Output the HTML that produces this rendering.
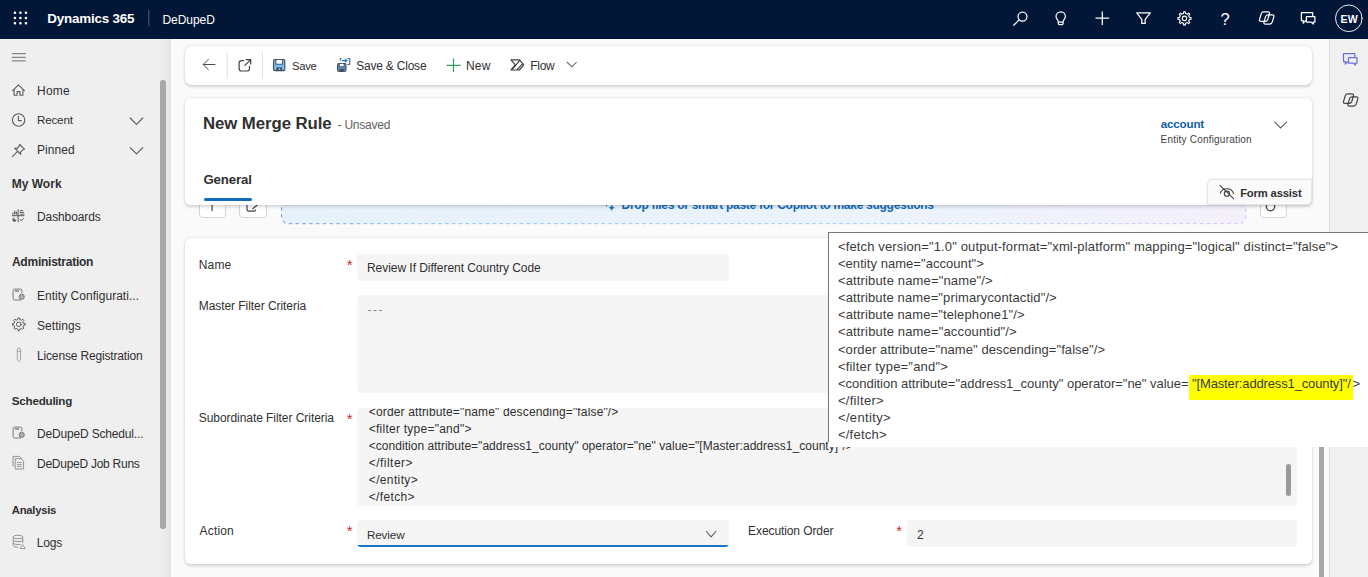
<!DOCTYPE html>
<html lang="en">
<head>
<meta charset="utf-8">
<title>Merge Rule: New Merge Rule - Dynamics 365</title>
<style>
*{box-sizing:border-box;margin:0;padding:0}
html,body{width:1368px;height:577px;overflow:hidden;background:#fafafa;font-family:"Liberation Sans",sans-serif;color:#303030;font-size:12px}
.t{position:absolute;white-space:pre;line-height:16px}
.a{position:absolute}
svg.ov{position:absolute;left:0;top:0;width:1368px;height:577px;overflow:visible;pointer-events:none}
#topbar{position:absolute;left:0;top:0;width:1368px;height:39px;background:#021638}
#side{position:absolute;left:0;top:39px;width:171px;height:538px;background:#efefef;border-right:1px solid #d4d4d4}
#rside{position:absolute;left:1329px;top:39px;width:39px;height:538px;background:#f0f0f0;border-left:1px solid #dcdcdc}
.card{position:absolute;background:#fff;border-radius:5px;box-shadow:0 1.5px 3.5px rgba(0,0,0,.15),0 0 2px rgba(0,0,0,.10)}
.fld{position:absolute;background:#f5f5f5;border-radius:4px}
.sbtn{position:absolute;background:#fff;border:1px solid #d6d6d6;border-radius:4px}
#popup{position:absolute;left:828px;top:232px;width:560px;height:214.6px;background:#fff;border-top:1px solid #787878}
#popupl{position:absolute;left:828px;top:232px;width:1px;height:210px;background:#787878}
#hl{position:absolute;left:1189px;top:375px;width:164.2px;height:24.6px;background:#ffff00}
</style>
</head>
<body>
<div id="under">
<div class="sbtn" style="left:198.5px;top:190px;width:27.5px;height:27.5px"></div>
<div class="sbtn" style="left:239px;top:190px;width:27.5px;height:27.5px"></div>
<div class="sbtn" style="left:1259.5px;top:190px;width:27px;height:27.5px"></div>
<svg class="ov"><defs><linearGradient id="dzf" x1="0" y1="0" x2="1" y2="0"><stop offset="0" stop-color="#e6f2fb"/><stop offset=".6" stop-color="#ebf3fc"/><stop offset="1" stop-color="#f4f0fb"/></linearGradient><linearGradient id="dzs" gradientUnits="userSpaceOnUse" x1="281" y1="0" x2="1246" y2="0"><stop offset="0" stop-color="#4a63e8"/><stop offset=".12" stop-color="#6aa6f2"/><stop offset=".7" stop-color="#86c3f3"/><stop offset="1" stop-color="#c7adfa"/></linearGradient></defs><rect x="281.6" y="170" width="964.2" height="53.7" rx="7" fill="url(#dzf)" stroke="url(#dzs)" stroke-opacity=".75" stroke-width="1" stroke-dasharray="3.4 3.4"/><path d="M611.7 205.2 L612.5 207 L614.3 207.8 L612.5 208.6 L611.7 210.4 L610.9 208.6 L609.1 207.8 L610.9 207 Z" fill="#0f6cbd" stroke="#0f6cbd" stroke-width=".5"/><circle cx="606.6" cy="205.8" r=".7" fill="#0f6cbd"/><path d="M212.1 198 V211" stroke="#424242" stroke-width="1.2"/><path d="M247 203 V209.6 Q247 211.2 248.6 211.2 H254 Q255.6 211.2 255.6 209.6 M252.5 209 L258.5 204" fill="none" stroke="#424242" stroke-width="1.2"/><ellipse cx="1270.5" cy="206.6" rx="4.2" ry="4.2" fill="none" stroke="#424242" stroke-width="1.3"/></svg>
<span class="t" style="left:621.60px;top:197.20px;font-size:12px;font-weight:bold;color:#0f6cbd;letter-spacing:-0.280px;">Drop files or smart paste for Copilot to make suggestions</span>
</div>
<div class="card" style="left:185px;top:238px;width:1127px;height:325.5px;border-radius:6px"></div>
<div class="fld" style="left:356.5px;top:254px;width:372.5px;height:26.5px"></div>
<div class="fld" style="left:356.5px;top:295px;width:940.5px;height:97.5px"></div>
<div class="fld" id="sub" style="left:356.5px;top:407.7px;width:940.5px;height:98.3px;overflow:hidden"></div>
<div class="fld" style="left:356.5px;top:520px;width:372.5px;height:27px;border-radius:4px;overflow:hidden"><div class="a" style="left:0;bottom:0;width:100%;height:1.7px;background:#1b74c5"></div></div>
<div class="fld" style="left:906.5px;top:520px;width:390.5px;height:27px"></div>
<div class="a" style="left:1286px;top:464px;width:5px;height:31.5px;border-radius:2.5px;background:#9a9a9a"></div>
<div class="a" style="left:0;top:407.7px;width:1368px;height:98.3px;overflow:hidden"><div class="a" style="left:0;top:-407.7px">
<span class="t" style="left:368.78px;top:403.90px;font-size:12px;letter-spacing:0.149px;">&lt;order attribute="name" descending="false"/&gt;</span>
<span class="t" style="left:368.78px;top:420.80px;font-size:12px;letter-spacing:0.248px;">&lt;filter type="and"&gt;</span>
<span class="t" style="left:368.78px;top:437.80px;font-size:12px;letter-spacing:0.029px;">&lt;condition attribute="address1_county" operator="ne" value="[Master:address1_county]"/&gt;</span>
<span class="t" style="left:368.78px;top:454.70px;font-size:12px;letter-spacing:0.463px;">&lt;/filter&gt;</span>
<span class="t" style="left:368.78px;top:471.80px;font-size:12px;letter-spacing:0.363px;">&lt;/entity&gt;</span>
<span class="t" style="left:368.78px;top:488.70px;font-size:12px;letter-spacing:0.349px;">&lt;/fetch&gt;</span>
</div></div>
<span class="t" style="left:198.70px;top:256.50px;font-size:12px;letter-spacing:0.192px;">Name</span>
<span class="t" style="left:198.70px;top:297.60px;font-size:12px;letter-spacing:-0.056px;">Master Filter Criteria</span>
<span class="t" style="left:198.70px;top:409.70px;font-size:12px;letter-spacing:-0.054px;">Subordinate Filter Criteria</span>
<span class="t" style="left:199.59px;top:522.60px;font-size:12px;letter-spacing:0.154px;">Action</span>
<span class="t" style="left:748.10px;top:522.60px;font-size:12px;letter-spacing:-0.096px;">Execution Order</span>
<span class="t" style="left:367.00px;top:259.70px;font-size:12px;letter-spacing:-0.045px;">Review If Different Country Code</span>
<span class="t" style="left:367.62px;top:301.50px;font-size:12px;color:#8a8a8a;letter-spacing:1.422px;">---</span>
<span class="t" style="left:367.00px;top:526.50px;font-size:11.64px;letter-spacing:-0.119px;">Review</span>
<span class="t" style="left:916.96px;top:526.50px;font-size:12px;">2</span>
<span class="t" style="left:346.64px;top:256.80px;font-size:15px;color:#c62d3a;">*</span>
<span class="t" style="left:346.64px;top:411.00px;font-size:15px;color:#c62d3a;">*</span>
<span class="t" style="left:346.64px;top:523.10px;font-size:15px;color:#c62d3a;">*</span>
<span class="t" style="left:896.14px;top:523.10px;font-size:15px;color:#c62d3a;">*</span>
<svg class="ov"><path d="M706 531 L711.1 536.9 L716.2 531" fill="none" stroke="#616161" stroke-width="1.1"/></svg>
<div class="card" style="left:185px;top:46px;width:1127px;height:38.7px;border-radius:7px"></div>
<div class="card" style="left:185px;top:98px;width:1127px;height:107.2px"></div>
<div class="a" style="left:1207px;top:178.6px;width:105px;height:26.6px;background:#fafafa;border:1px solid #e6e6e6;border-radius:6px 0 5px 0;box-shadow:0 0 2px rgba(0,0,0,.12)"></div>
<div class="a" style="left:203.5px;top:198px;width:48.2px;height:3px;border-radius:1.5px;background:#0f6cbd"></div>
<svg class="ov"><path d="M227.3 51.5 V78.7 M262.4 51.5 V78.7" stroke="#e0e0e0" stroke-width="1"/><g fill="none" stroke="#424242" stroke-width="1.1" stroke-linecap="round" stroke-linejoin="round"><path d="M215 64.5 H203.4 M208.4 59.3 L203.2 64.5 L208.4 69.7" stroke="#4a4a4a" stroke-width="1"/><path d="M243.6 60.6 H241.6 Q239.1 60.6 239.1 63.1 V68.5 Q239.1 71 241.6 71 H247 Q249.5 71 249.5 68.5 V66.4 M246.2 59.6 H250.7 V64.1 M250.5 59.8 L244.9 65.4" stroke-width="1.2"/><path d="M511 59.9 H519.6 L523.7 64.9 L519.4 70 H511 L515.3 64.9 Z M519.6 60.7 L512.9 68.7 M522.5 63.8 L517 69.7" stroke-width="1.2"/></g><path d="M566.9 62 L571.8 66.8 L576.6 62" fill="none" stroke="#616161" stroke-width="1.05"/><path d="M1274.2 121.6 L1280.6 128 L1287 121.6" fill="none" stroke="#616161" stroke-width="1.1"/><path d="M453.5 58.6 V72 M446.6 65.3 H460.6" stroke="#2aa05a" stroke-width="1.2" fill="none"/><rect x="273.6" y="59.5" width="11.2" height="11.1" rx="1.2" fill="#79bdf5" stroke="#3d4b5d" stroke-width="1.1"/><rect x="275.9" y="59.6" width="6.7" height="4.6" fill="#fff" stroke="#3d4b5d" stroke-width=".9"/><rect x="276.3" y="67.4" width="5.8" height="3.4" fill="#3d4b5d"/><rect x="278.6" y="68.5" width="1.6" height="1.4" fill="#b9d8f2"/><rect x="337.5" y="63.5" width="8.5" height="7.9" rx="1" fill="#5f87b3" stroke="#3d4b5d" stroke-width="1"/><rect x="339.4" y="63.6" width="4.6" height="3" fill="#fff" stroke="#3d4b5d" stroke-width=".7"/><rect x="339.6" y="69" width="4.2" height="2.4" fill="#3d4b5d"/><path d="M340.2 60.6 V58.6 H341.6 M347.6 58.6 H349.8 V64.4 H347.4" fill="none" stroke="#3d4b5d" stroke-width="1"/><path d="M341.8 60.6 H346.6 M345 58.9 L346.9 60.6 L345 62.3" fill="none" stroke="#1a7ae0" stroke-width="1.2"/><g fill="none" stroke="#424242" stroke-width="1.1" stroke-linecap="round"><path d="M1219.9 185.4 L1233.6 198.7"/><path d="M1220.4 193.2 Q1221.6 188.8 1227 188.8 Q1232.2 188.8 1233.5 193.6"/><circle cx="1226.9" cy="193.7" r="2.6"/></g></svg>
<div id="hdrtext">
<span class="t" style="left:292.04px;top:57.80px;font-size:11.29px;letter-spacing:-0.320px;">Save</span>
<span class="t" style="left:356.20px;top:57.80px;font-size:12px;letter-spacing:-0.211px;">Save &amp; Close</span>
<span class="t" style="left:466.00px;top:57.80px;font-size:12px;letter-spacing:0.195px;">New</span>
<span class="t" style="left:530.20px;top:57.80px;font-size:12px;letter-spacing:-0.260px;">Flow</span>
<span class="t" style="left:203.00px;top:116.00px;font-size:16.8px;font-weight:bold;letter-spacing:-0.077px;">New Merge Rule</span>
<span class="t" style="left:337.52px;top:117.00px;font-size:12px;color:#616161;letter-spacing:-0.222px;">- Unsaved</span>
<span class="t" style="left:1160.68px;top:116.00px;font-size:11.64px;font-weight:bold;color:#115ea3;letter-spacing:-0.171px;">account</span>
<span class="t" style="left:1160.60px;top:131.50px;font-size:10px;color:#424242;letter-spacing:0.199px;">Entity Configuration</span>
<span class="t" style="left:203.43px;top:171.70px;font-size:13.2px;font-weight:bold;letter-spacing:-0.105px;">General</span>
<span class="t" style="left:1240.13px;top:185.30px;font-size:11.25px;font-weight:bold;letter-spacing:-0.165px;">Form assist</span>
</div>
<div class="a" style="left:1319.3px;top:300px;width:4.8px;height:290px;background:#a8a8a8"></div>
<div id="side"></div>
<div class="a" style="left:158px;top:39px;width:13px;height:538px;background:linear-gradient(to right,#efefef,#e5e5e5)"></div>
<div class="a" style="left:160.3px;top:80px;width:5.4px;height:449px;border-radius:2.7px;background:#a8a8a8"></div>
<svg class="ov"><path d="M11.8 53.7 H25.8 M11.8 57.3 H25.8 M11.8 60.9 H25.8" stroke="#6e6e6e" stroke-width="1" fill="none"/><g fill="none" stroke="#5a5a5a" stroke-width="1.1" stroke-linejoin="round" stroke-linecap="round"><path d="M12.6 90.6 L18.5 84.9 L24.4 90.6 M14.1 89.4 V95.2 H17.1 V91.6 H19.9 V95.2 H22.9 V89.4"/><circle cx="18.6" cy="120" r="6.2"/><path d="M18.4 116.2 V120.6 H21.4"/><path d="M19.7 144.4 L24.6 149.3 L22.8 149.8 L20.5 152.1 L20.8 154.4 L14.6 148.2 L16.9 148.5 L19.2 146.2 Z M17.6 151.4 L12.3 156.7"/><path d="M130.2 118 L136.5 124.3 L142.8 118 M130.2 147.6 L136.5 153.9 L142.8 147.6"/><path d="M23.60 323.30 L25.14 323.46 L25.14 325.14 L23.60 325.30 L22.90 326.98 L23.88 328.19 L22.69 329.38 L21.48 328.40 L19.80 329.10 L19.64 330.64 L17.96 330.64 L17.80 329.10 L16.12 328.40 L14.91 329.38 L13.72 328.19 L14.70 326.98 L14.00 325.30 L12.46 325.14 L12.46 323.46 L14.00 323.30 L14.70 321.62 L13.72 320.41 L14.91 319.22 L16.12 320.20 L17.80 319.50 L17.96 317.96 L19.64 317.96 L19.80 319.50 L21.48 320.20 L22.69 319.22 L23.88 320.41 L22.90 321.62 Z" stroke-width="1"/><circle cx="18.8" cy="324.3" r="2.3" stroke-width="1"/></g><g stroke="#555" fill="none" stroke-width="1"><path d="M18.1 209.4 V222.2 M11.9 215.7 H24.4"/><path d="M13 214.5 V212.5 M14.8 214.5 V210.8 M16.4 214.5 V211.8" stroke-width="1.1"/><path d="M19.8 210.6 H23.2 M19.8 212.4 H24 M19.8 214.1 H24.4" stroke-width=".9"/><path d="M14.4 217.8 A2 2 0 1 0 16.4 219.8 H14.4 Z" fill="#555" stroke="none"/><path d="M19.8 219.4 L21.2 220.7 L23.8 218.2" stroke-width="1"/></g><g transform="translate(0,0)" fill="none" stroke="#7a7a7a" stroke-width="1"><path d="M14.6 289.1 H20.4 Q21.9 289.1 21.9 290.6 V293.2 M21 300 H14.6 Q13.1 300 13.1 298.5 V290.6 Q13.1 289.1 14.6 289.1"/><path d="M14.8 291 H19.2" stroke-width="1.4"/><circle cx="21.7" cy="296.8" r="2.6" fill="#7a7a7a" fill-opacity=".55"/></g><g transform="translate(0,138)" fill="none" stroke="#7a7a7a" stroke-width="1"><path d="M14.6 289.1 H20.4 Q21.9 289.1 21.9 290.6 V293.2 M21 300 H14.6 Q13.1 300 13.1 298.5 V290.6 Q13.1 289.1 14.6 289.1"/><path d="M14.8 291 H19.2" stroke-width="1.4"/><circle cx="21.7" cy="296.8" r="2.6" fill="#7a7a7a" fill-opacity=".55"/></g><path d="M17.3 349.5 Q17.3 348 18.9 348 Q20.5 348 20.5 349.5 V360 L18.9 361.5 L17.3 360 Z M17.3 351.2 H20.5" fill="none" stroke="#9a9a9a" stroke-width=".9"/><g fill="none" stroke="#8a8a8a" stroke-width=".9"><path d="M13 466.5 V456.4 H19.5 L22 459 "/><path d="M15.2 458.6 H21 L23.6 461.2 V469 H15.2 Z"/><path d="M16.8 462.6 H22 M16.8 464.6 H22 M16.8 466.6 H22" stroke-width=".8"/></g><g fill="none" stroke="#8a8a8a" stroke-width=".9"><ellipse cx="18" cy="537" rx="4.8" ry="1.8"/><path d="M13.2 537 V545.5 Q13.2 547.3 18 547.3 M22.8 537 V543 M13.2 539.9 Q13.2 541.7 18 541.7 Q22.8 541.7 22.8 539.9 M13.2 542.8 Q13.2 544.6 18 544.6 Q20 544.6 21 544.2"/><path d="M20 548.5 L22.6 544.6 L25.2 548.5 Z" stroke-width=".8"/></g></svg>
<span class="t" style="left:37.00px;top:82.80px;font-size:12px;letter-spacing:0.258px;">Home</span>
<span class="t" style="left:37.00px;top:112.30px;font-size:11.64px;letter-spacing:-0.186px;">Recent</span>
<span class="t" style="left:37.00px;top:142.40px;font-size:12px;letter-spacing:0.042px;">Pinned</span>
<span class="t" style="left:11.70px;top:176.00px;font-size:12px;font-weight:bold;letter-spacing:0.014px;">My Work</span>
<span class="t" style="left:37.00px;top:209.40px;font-size:12px;letter-spacing:-0.102px;">Dashboards</span>
<span class="t" style="left:11.96px;top:254.00px;font-size:12px;font-weight:bold;letter-spacing:-0.246px;">Administration</span>
<span class="t" style="left:37.00px;top:287.70px;font-size:12px;letter-spacing:0.030px;">Entity Configurati...</span>
<span class="t" style="left:37.00px;top:317.60px;font-size:12px;letter-spacing:0.066px;">Settings</span>
<span class="t" style="left:37.00px;top:347.70px;font-size:12px;letter-spacing:-0.157px;">License Registration</span>
<span class="t" style="left:11.86px;top:392.80px;font-size:11.64px;font-weight:bold;letter-spacing:-0.245px;">Scheduling</span>
<span class="t" style="left:37.00px;top:425.50px;font-size:12px;letter-spacing:-0.171px;">DeDupeD Schedul...</span>
<span class="t" style="left:37.00px;top:455.50px;font-size:12px;letter-spacing:-0.260px;">DeDupeD Job Runs</span>
<span class="t" style="left:11.76px;top:501.70px;font-size:11.29px;font-weight:bold;letter-spacing:-0.267px;">Analysis</span>
<span class="t" style="left:36.80px;top:535.30px;font-size:12px;letter-spacing:-0.166px;">Logs</span>
<div id="rside"></div>
<svg class="ov"><g transform="translate(42.1,41)" fill="none" stroke="#6b70d8" stroke-width="1.25" stroke-linejoin="round"><path d="M1301.4 12.7 H1312.7 V20.6 H1305.6 L1303.2 23.2 V20.6 H1301.4 Z"/><path d="M1306.4 16.7 H1314.9 V22.1 H1313.3 V24 L1311.2 22.1 H1306.4 Z" fill="#f0f0f0"/></g><g transform="translate(84,82)" fill="none" stroke="#424242" stroke-width="1.2" stroke-linejoin="round"><path d="M1263.6 11.9 H1267.8 Q1270 11.9 1269.4 14 L1267.8 19.5 Q1267.2 21.4 1265.2 21.4 H1261.2 Q1258.9 21.4 1259.6 19.2 L1261.2 13.8 Q1261.8 11.9 1263.6 11.9 Z"/><path d="M1268.2 14.8 H1272.2 Q1274.4 14.8 1273.8 16.9 L1272.2 22.2 Q1271.6 24.1 1269.6 24.1 H1265.6 Q1263.4 24.1 1264 22 L1265.6 16.7 Q1266.2 14.8 1268.2 14.8 Z"/></g></svg>
<div id="popup"></div><div id="popupl"></div><div id="hl"></div>
<span class="t" style="left:837.94px;top:238.90px;font-size:13px;color:#3b3b3b;letter-spacing:0.139px;">&lt;fetch version="1.0" output-format="xml-platform" mapping="logical" distinct="false"&gt;</span>
<span class="t" style="left:837.94px;top:256.00px;font-size:13px;color:#3b3b3b;letter-spacing:0.052px;">&lt;entity name="account"&gt;</span>
<span class="t" style="left:837.94px;top:273.10px;font-size:13px;color:#3b3b3b;letter-spacing:0.151px;">&lt;attribute name="name"/&gt;</span>
<span class="t" style="left:837.94px;top:290.20px;font-size:13px;color:#3b3b3b;letter-spacing:0.134px;">&lt;attribute name="primarycontactid"/&gt;</span>
<span class="t" style="left:837.94px;top:307.30px;font-size:13px;color:#3b3b3b;letter-spacing:0.126px;">&lt;attribute name="telephone1"/&gt;</span>
<span class="t" style="left:837.94px;top:324.40px;font-size:13px;color:#3b3b3b;letter-spacing:0.155px;">&lt;attribute name="accountid"/&gt;</span>
<span class="t" style="left:837.94px;top:341.50px;font-size:13px;color:#3b3b3b;letter-spacing:0.084px;">&lt;order attribute="name" descending="false"/&gt;</span>
<span class="t" style="left:837.94px;top:358.60px;font-size:13px;color:#3b3b3b;letter-spacing:0.191px;">&lt;filter type="and"&gt;</span>
<span class="t" style="left:837.94px;top:392.80px;font-size:13px;color:#3b3b3b;letter-spacing:0.289px;">&lt;/filter&gt;</span>
<span class="t" style="left:837.94px;top:409.90px;font-size:13px;color:#3b3b3b;letter-spacing:0.356px;">&lt;/entity&gt;</span>
<span class="t" style="left:837.94px;top:427.00px;font-size:13px;color:#3b3b3b;letter-spacing:0.232px;">&lt;/fetch&gt;</span>
<span class="t" style="left:837.94px;top:375.70px;font-size:13px;color:#3b3b3b;letter-spacing:-0.017px;">&lt;condition attribute="address1_county" operator="ne" value=</span>
<span class="t" style="left:1192.01px;top:375.70px;font-size:13px;color:#3b3b3b;letter-spacing:-0.140px;">"[Master:address1_county]"/</span>
<span class="t" style="left:1352.61px;top:375.70px;font-size:13px;color:#3b3b3b;">&gt;</span>
<div id="topbar"></div>
<svg class="ov"><rect x="13.7" y="11.5" width="2.5" height="2.5" rx="1.1" fill="#fff"/><rect x="13.7" y="16.8" width="2.5" height="2.5" rx="1.1" fill="#fff"/><rect x="13.7" y="22.1" width="2.5" height="2.5" rx="1.1" fill="#fff"/><rect x="19.2" y="11.5" width="2.5" height="2.5" rx="1.1" fill="#fff"/><rect x="19.2" y="16.8" width="2.5" height="2.5" rx="1.1" fill="#fff"/><rect x="19.2" y="22.1" width="2.5" height="2.5" rx="1.1" fill="#fff"/><rect x="24.7" y="11.5" width="2.5" height="2.5" rx="1.1" fill="#fff"/><rect x="24.7" y="16.8" width="2.5" height="2.5" rx="1.1" fill="#fff"/><rect x="24.7" y="22.1" width="2.5" height="2.5" rx="1.1" fill="#fff"/><line x1="148.8" y1="9.6" x2="148.8" y2="26.2" stroke="#fff" stroke-opacity=".3" stroke-width="1"/><g fill="none" stroke="#fff" stroke-width="1.25" stroke-linecap="round" stroke-linejoin="round"><circle cx="1022.5" cy="16.6" r="4.5"/><path d="M1019.2 19.9 L1013.7 25.2"/><path d="M1058.3 21.6 C1058.3 20 1056 19 1056 16.6 A4.7 4.7 0 0 1 1065.4 16.6 C1065.4 19 1063.1 20 1063.1 21.6 V23.4 Q1063.1 24.5 1062 24.5 H1059.4 Q1058.3 24.5 1058.3 23.4 Z M1058.3 22 H1063.1"/><path d="M1102.3 11.5 V24.9 M1095.5 18.2 H1109.2" stroke-linecap="butt"/><path d="M1136.7 12.9 H1150.3 L1145.2 19.3 V23.4 H1141.8 V19.3 Z"/><path d="M1189.39 17.38 L1191.04 17.53 L1191.04 19.27 L1189.39 19.42 L1188.68 21.14 L1189.74 22.41 L1188.51 23.64 L1187.24 22.58 L1185.52 23.29 L1185.37 24.94 L1183.63 24.94 L1183.48 23.29 L1181.76 22.58 L1180.49 23.64 L1179.26 22.41 L1180.32 21.14 L1179.61 19.42 L1177.96 19.27 L1177.96 17.53 L1179.61 17.38 L1180.32 15.66 L1179.26 14.39 L1180.49 13.16 L1181.76 14.22 L1183.48 13.51 L1183.63 11.86 L1185.37 11.86 L1185.52 13.51 L1187.24 14.22 L1188.51 13.16 L1189.74 14.39 L1188.68 15.66 Z" stroke-width="1.15"/><circle cx="1184.5" cy="18.4" r="2.2" stroke-width="1.15"/><circle cx="1348.8" cy="18.3" r="13.3" stroke-width="1" stroke-opacity=".92"/></g><g transform="translate(0,0)" fill="none" stroke="#fff" stroke-width="1.2" stroke-linejoin="round"><path d="M1263.6 11.9 H1267.8 Q1270 11.9 1269.4 14 L1267.8 19.5 Q1267.2 21.4 1265.2 21.4 H1261.2 Q1258.9 21.4 1259.6 19.2 L1261.2 13.8 Q1261.8 11.9 1263.6 11.9 Z"/><path d="M1268.2 14.8 H1272.2 Q1274.4 14.8 1273.8 16.9 L1272.2 22.2 Q1271.6 24.1 1269.6 24.1 H1265.6 Q1263.4 24.1 1264 22 L1265.6 16.7 Q1266.2 14.8 1268.2 14.8 Z"/></g><g transform="translate(0,0)" fill="none" stroke="#fff" stroke-width="1.25" stroke-linejoin="round"><path d="M1301.4 12.7 H1312.7 V20.6 H1305.6 L1303.2 23.2 V20.6 H1301.4 Z"/><path d="M1306.4 16.7 H1314.9 V22.1 H1313.3 V24 L1311.2 22.1 H1306.4 Z" fill="#021638"/></g></svg>
<span class="t" style="left:47.20px;top:11.40px;font-size:13.4px;font-weight:bold;color:#fff;letter-spacing:-0.182px;">Dynamics 365</span>
<span class="t" style="left:162.40px;top:11.60px;font-size:12px;color:#fff;letter-spacing:-0.039px;">DeDupeD</span>
<span class="t" style="left:1340.57px;top:10.60px;font-size:10.6px;font-weight:bold;color:#fff;letter-spacing:0.246px;">EW</span>
<span class="t" style="left:1220.60px;top:10.50px;font-size:16.5px;color:#fff;">?</span>
</body>
</html>
